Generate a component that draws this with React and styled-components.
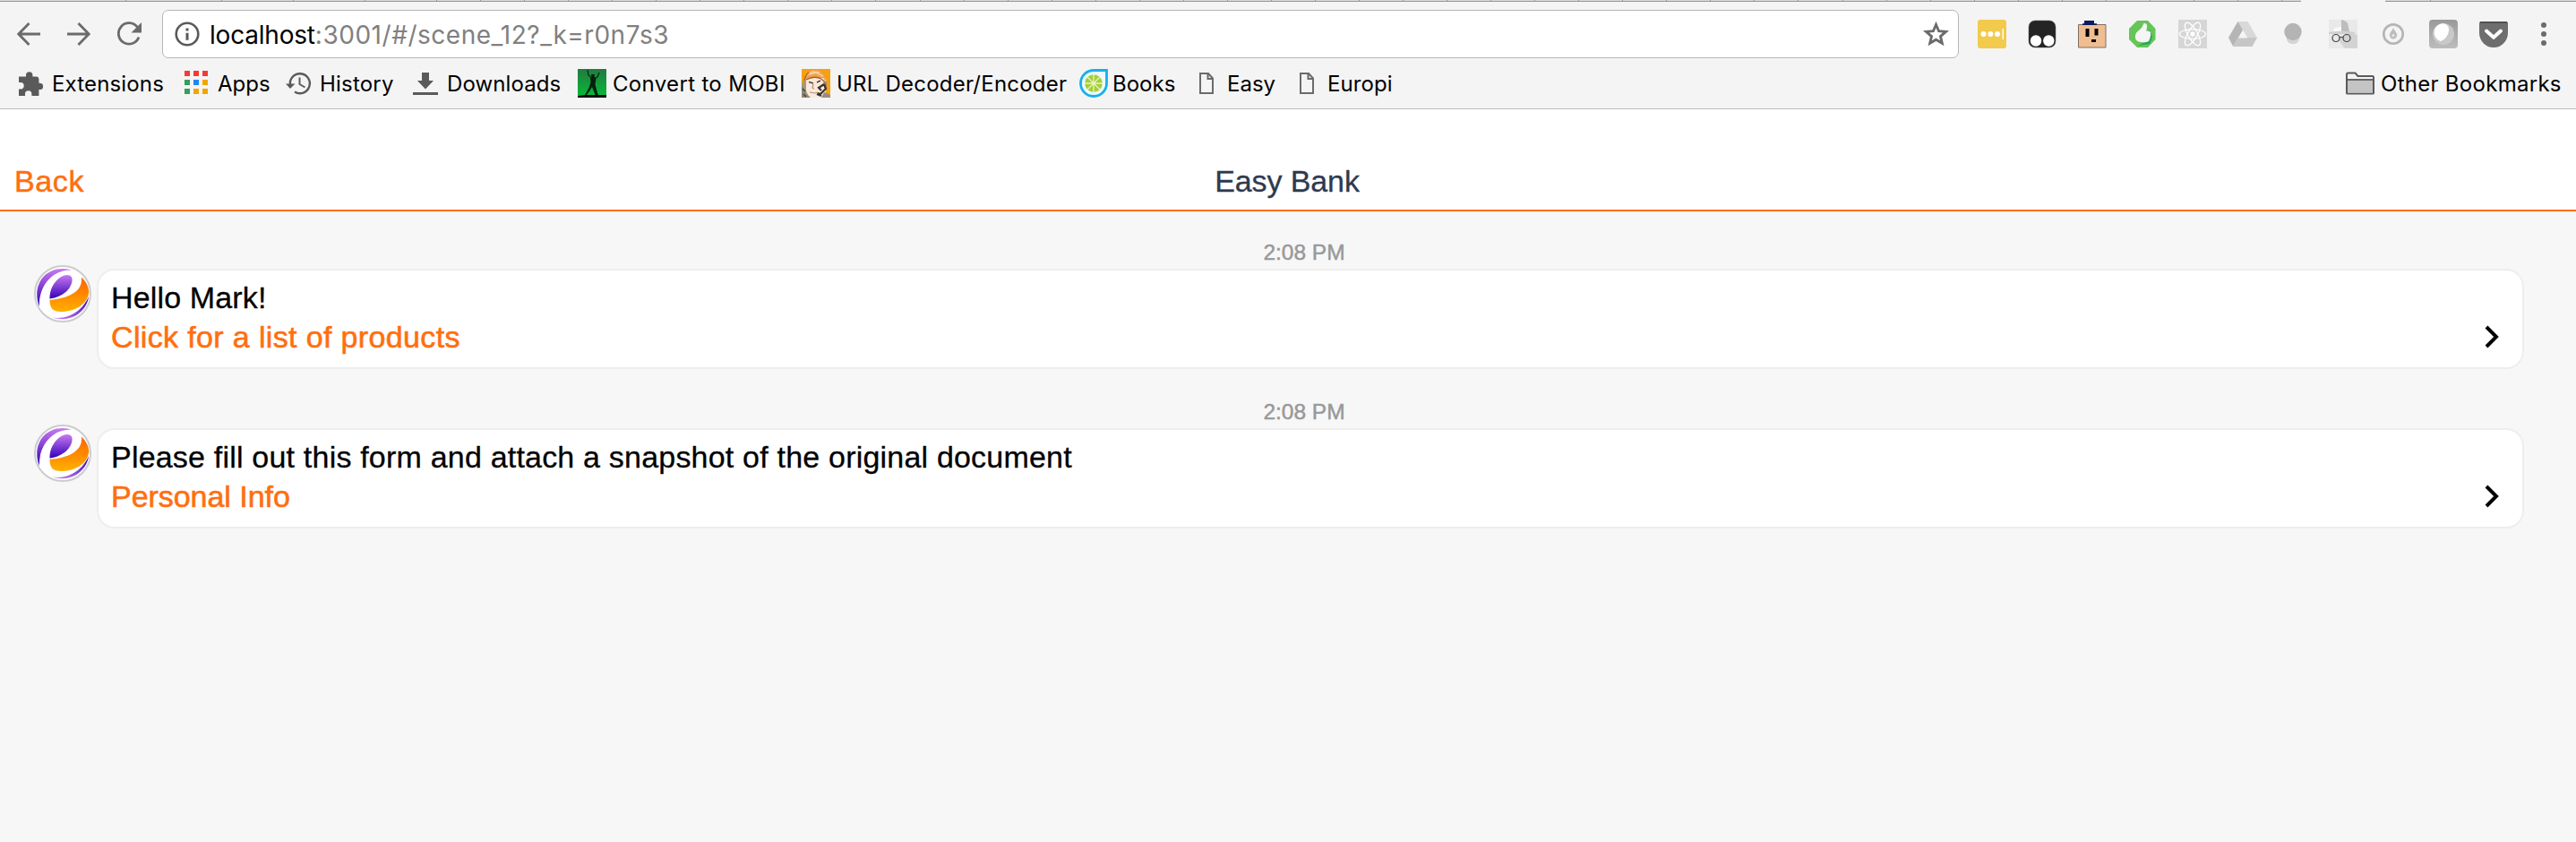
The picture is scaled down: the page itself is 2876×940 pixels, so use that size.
import React from "react";
import styled, { createGlobalStyle } from "styled-components";

const GlobalStyle = createGlobalStyle`
  * { box-sizing: border-box; }
  body { margin: 0; background: #f7f7f7; }
  svg { display: block; flex: none; }
`;

const Page = styled.div`
  width: 2876px;
  height: 940px;
  display: flex;
  flex-direction: column;
  overflow: hidden;
  background: #f7f7f7;
  font-family: "Liberation Sans", Arial, sans-serif;
`;

const Chrome = styled.header`
  flex: none;
  height: 122px;
  background: #f4f4f4;
  border-bottom: 1px solid #bcbcbc;
  font-family: Inter, sans-serif;
`;

const TabStrip = styled.div`
  display: flex;
  height: 2px;
`;

const Tab = styled.div`
  flex: none;
  width: ${(p) => p.$width}px;
  background: ${(p) => (p.$active ? "#f4f4f4" : "#dadada")};
  border-bottom: 1px solid ${(p) => (p.$active ? "#f4f4f4" : "#979797")};
  border-right: ${(p) => (p.$edge ? "1px solid #979797" : "0")};
`;

const NavRow = styled.div`
  display: flex;
  align-items: center;
  height: 54px;
  margin-top: 9px;
  padding-left: 19px;
`;

const NavButton = styled.button`
  flex: none;
  width: ${(p) => p.$width}px;
  padding: 0;
  border: 0;
  background: none;
`;

const AddressBar = styled.div`
  flex: none;
  display: flex;
  align-items: center;
  width: 2006px;
  height: 54px;
  padding: 0 9px 0 13px;
  background: #fff;
  border: 1px solid #b6b6b6;
  border-radius: 7px;
`;

const Url = styled.div`
  flex: 1;
  margin-left: 11px;
  padding-top: 1px;
  font-size: 28px;
  line-height: 34px;
  letter-spacing: 0.52px;
  color: #808080;
  white-space: nowrap;
`;

const Host = styled.span`
  color: #000;
  letter-spacing: -0.2px;
`;

const ExtensionList = styled.div`
  display: flex;
  gap: 24px;
  margin-left: 21px;
`;

const MenuButton = styled(NavButton)`
  margin-left: 37px;
`;

const BookmarkRow = styled.nav`
  display: flex;
  align-items: center;
  height: 32px;
  margin-top: 12px;
  padding: 0 15px 0 20px;
`;

const BookmarkItem = styled.a`
  flex: none;
  display: flex;
  align-items: center;
  width: ${(p) => p.$width}px;
  margin-left: ${(p) => (p.$last ? "auto" : "0")};
`;

const BookmarkIcon = styled.span`
  flex: none;
  width: ${(p) => p.$slot}px;
`;

const BookmarkLabel = styled.span`
  padding-top: 1px;
  font-size: 24px;
  line-height: 30px;
  letter-spacing: ${(p) => p.$tracking}px;
  color: #000;
  white-space: nowrap;
`;

const TitleBar = styled.div`
  flex: none;
  display: grid;
  grid-template-columns: 1fr auto 1fr;
  height: 114px;
  padding: 60px 18px 0 16px;
  background: #fff;
  border-bottom: 2px solid #ff6f0f;
  font-size: 34px;
  line-height: 40px;
`;

const BackLink = styled.a`
  color: #ff6f0f;
  letter-spacing: 0.6px;
  -webkit-text-stroke: 0.5px #ff6f0f;
`;

const Title = styled.h1`
  margin: 0;
  font-size: inherit;
  font-weight: 400;
  letter-spacing: -0.1px;
  color: #2d3a50;
  -webkit-text-stroke: 0.3px #2d3a50;
`;

const Chat = styled.main`
  display: flex;
  flex-direction: column;
  gap: 32px;
  padding: 32px 0 0 38px;
`;

const Message = styled.section`
  display: flex;
  flex-direction: column;
`;

const Time = styled.time`
  height: 28px;
  padding-right: 2px;
  font-size: 24.5px;
  line-height: 28px;
  text-align: center;
  color: #999;
  -webkit-text-stroke: 0.5px #999;
`;

const MessageBody = styled.div`
  display: flex;
  gap: 6px;
  height: 118px;
`;

const Avatar = styled.div`
  flex: none;
  width: 64px;
  height: 64px;
`;

const Bubble = styled.div`
  display: flex;
  justify-content: space-between;
  align-items: flex-end;
  width: 2710px;
  height: 112px;
  margin-top: 4px;
  padding: 0 25px 12px 14px;
  background: #fff;
  border: 2px solid #eee;
  border-radius: 20px;
`;

const Line = styled.div`
  font-size: 34px;
  line-height: 44px;
  letter-spacing: ${(p) => p.$tracking}px;
  color: ${(p) => (p.$link ? "#ff6f0f" : "#000")};
  -webkit-text-stroke: ${(p) => (p.$link ? "0.6px #ff6f0f" : "0.3px #000")};
  white-space: nowrap;
`;

const Chevron = styled.svg`
  margin-bottom: 8px;
`;

const Icon = ({ w = 32, h = 32, children, ...rest }) => (
  <svg width={w} height={h} viewBox={`0 0 ${w} ${h}`} fill="none" {...rest}>
    {children}
  </svg>
);

const BackArrow = () => (
  <Icon w={28} stroke="#6b6b6b" strokeWidth="2.8">
    <path d="M26 16H2M13.500 4L1.800 16l11.700 12" />
  </Icon>
);

const ForwardArrow = () => (
  <Icon w={28} stroke="#6b6b6b" strokeWidth="2.8">
    <path d="M0 16h24M12.500 4l11.700 12-11.700 12" />
  </Icon>
);

const Reload = () => (
  <Icon w={28}>
    <path d="M22.500 8.500A11.700 11.700 0 1 0 24 19.500" stroke="#6b6b6b" strokeWidth="2.8" />
    <path d="M27 3v11.500H15.500z" fill="#6b6b6b" />
  </Icon>
);

const Info = () => (
  <Icon w={28} h={28}>
    <circle cx="14" cy="14" r="12.300" stroke="#5a5a5a" strokeWidth="2.600" />
    <path d="M12.500 7.500h3v3h-3zM12.500 12.700h3v8h-3z" fill="#5a5a5a" />
  </Icon>
);

const Star = () => (
  <Icon>
    <path
      d="M16.500 5.500l3.100 7.200 7.900.7-6 5.200 1.800 7.700-6.800-4.100-6.800 4.100 1.800-7.700-6-5.200 7.900-.7z"
      stroke="#6b6b6b"
      strokeWidth="2.900"
    />
  </Icon>
);

const TypingIcon = () => (
  <Icon>
    <rect width="32" height="32" rx="3" fill="#f2ca4c" />
    <g fill="#fff">
      <circle cx="6.500" cy="16" r="3" />
      <circle cx="14.300" cy="16" r="3" />
      <circle cx="22" cy="16" r="3" />
      <path d="M27.500 10h1.500v12h-1.500z" />
    </g>
  </Icon>
);

const GogglesIcon = () => (
  <Icon>
    <rect x="1" y="1" width="30" height="30" rx="7" fill="#242424" stroke="#555" strokeWidth=".5" />
    <circle cx="9" cy="23.500" r="6.200" fill="#fff" />
    <circle cx="23.300" cy="23.500" r="6.200" fill="#fff" />
  </Icon>
);

const BoxFaceIcon = () => (
  <Icon>
    <path d="M7 1h11v4H7z" fill="#0d1b5e" />
    <path d="M.5 5.500h30.500v25.500H.5z" fill="#efbd92" stroke="#806e60" />
    <path d="M5 4.200h16v1.800H5z" fill="#0d1b5e" />
    <path d="M8.500 10h4v9h-4zM18.500 10h4v7.500h-4zM15 22h5v3h-5z" fill="#000" />
  </Icon>
);

const ThumbIcon = () => (
  <Icon>
    <path d="M10 1h12l8.500 9v12L22 31H10L1 22V10z" fill="#65c558" />
    <path d="M11 29l13-2 3-8-3-8-5 14z" fill="#159c55" opacity=".8" />
    <path
      d="M17.500 4c2.500-.5 4 1.500 3.500 4l-.7 4.500 3.500.5c1.600.3 1.600 2 1 3 .8 1 .6 2.200-.3 3 .5 1.200 0 2.200-.8 2.700.2 1.800-1 2.800-2.500 3-3 .8-7 .8-9.500-.2-3-1-4-3-3.700-6 .2-4 2-5 5-7.500 2.500-2.200 3-4 4.500-7z"
      fill="#f5f5f5"
    />
  </Icon>
);

const AtomIcon = () => (
  <Icon>
    <path d="M0 0h32v32H0z" fill="#d6d6d6" />
    <g stroke="#fff" strokeWidth="1.300">
      <ellipse cx="16" cy="16" rx="14.500" ry="5.300" />
      <ellipse cx="16" cy="16" rx="14.500" ry="5.300" transform="rotate(60 16 16)" />
      <ellipse cx="16" cy="16" rx="14.500" ry="5.300" transform="rotate(120 16 16)" />
    </g>
    <circle cx="16" cy="16" r="2.700" fill="#fff" />
  </Icon>
);

const DriveIcon = () => (
  <Icon>
    <path d="M10.500 2h11L32 20H21z" fill="#d9d9d9" />
    <path d="M10.500 2L0 20l5.300 10L16 11.500z" fill="#b5b5b5" />
    <path d="M5.300 30L11 20h21l-5.500 10z" fill="#c6c6c6" />
    <path d="M16 12l-5 8.500h10z" fill="#f4f4f4" />
  </Icon>
);

const BulbIcon = () => (
  <Icon>
    <circle cx="16" cy="20" r="7.300" fill="#d5d5d5" />
    <circle cx="16" cy="13.500" r="9.700" fill="#b4b4b4" />
  </Icon>
);

const SpyIcon = () => (
  <Icon>
    <path d="M0 0h32v32H0z" fill="#e9e9e9" />
    <path d="M10 22l13-8 9 3v15H18z" fill="#d3d3d3" />
    <path d="M14 0c4 1 6 2 7 4l2 9-9 1z" fill="#bdbdbd" />
    <path d="M7 9l7-1v5H5z" fill="#fafafa" />
    <path d="M0 14q15-3 30 0l-2 2H0z" fill="#d0d0d0" />
    <g stroke="#454545" strokeWidth="1.200">
      <circle cx="8" cy="20.500" r="4" />
      <circle cx="20" cy="20.500" r="4" />
      <path d="M12 20q2-1.500 4 0" />
    </g>
  </Icon>
);

const DropIcon = () => (
  <Icon>
    <circle cx="16" cy="16" r="10.700" stroke="#b5b5b5" strokeWidth="2.700" />
    <path d="M16 9c2 4 4.200 6 4.200 8.300a4.200 4.200 0 0 1-8.400 0C11.800 15 14 13 16 9z" fill="#bdbdbd" />
    <circle cx="16" cy="17.500" r="1.500" fill="#e8e8e8" />
  </Icon>
);

const OrbIcon = () => (
  <Icon>
    <defs>
      <linearGradient id="orb-bg" x1="0" y1="0" x2="0" y2="1">
        <stop offset="0" stopColor="#999" />
        <stop offset="1" stopColor="#bdbdbd" />
      </linearGradient>
    </defs>
    <rect width="32" height="32" rx="4" fill="url(#orb-bg)" />
    <circle cx="16" cy="16" r="12" fill="#c9c9c9" />
    <path d="M10 6c7-4 12 0 12 5 0 6-4 11-9 13C5 22 3 11 10 6z" fill="#fff" />
  </Icon>
);

const PocketIcon = () => (
  <Icon>
    <path d="M2 2h28q2 0 2 2v10.500a16 16.500 0 0 1-32 0V4q0-2 2-2z" fill="#6e6e6e" />
    <path d="M1 3h30" stroke="#484848" strokeWidth="1.500" />
    <path d="M8 12.500l8 7.300 8-7.300" stroke="#fff" strokeWidth="4" strokeLinecap="round" strokeLinejoin="round" />
  </Icon>
);

const MenuDots = () => (
  <Icon w={6} h={28}>
    <circle cx="3" cy="4" r="3" fill="#6b6b6b" />
    <circle cx="3" cy="14" r="3" fill="#6b6b6b" />
    <circle cx="3" cy="24" r="3" fill="#6b6b6b" />
  </Icon>
);

const PuzzleIcon = () => (
  <Icon w={28}>
    <path
      d="M1 8.500h8V7a3.700 3.700 0 0 1 7.400 0v1.500h4q3 0 3 3v4.200h1a3.700 3.700 0 0 1 0 7.400h-1V30h-8v-2a3.700 3.700 0 0 0-7.400 0v2H1v-7.500h2a3.700 3.700 0 0 0 0-7.400H1z"
      fill="#5a5a5a"
    />
  </Icon>
);

const APP_COLORS = ["#f53a35", "#f53a35", "#f53a35", "#31a05a", "#2086f5", "#f2a500", "#31a05a", "#f2a500", "#f2a500"];

const AppsIcon = () => (
  <Icon w={28}>
    {APP_COLORS.map((c, i) => (
      <rect key={i} x={1 + (i % 3) * 10} y={2 + Math.floor(i / 3) * 10} width="6" height="6" fill={c} />
    ))}
  </Icon>
);

const HistoryIcon = () => (
  <Icon w={30}>
    <path d="M5 18A11 11 0 1 1 10 25.500" stroke="#5a5a5a" strokeWidth="2.400" />
    <path d="M0 16.500h10.500L5 22z" fill="#5a5a5a" />
    <path d="M15.500 9.500V17l6 3.500" stroke="#5a5a5a" strokeWidth="2" />
  </Icon>
);

const DownloadIcon = () => (
  <Icon w={28}>
    <path d="M10 4h8v9h5l-9 9.500L5 13h5zM0 26h28v3H0z" fill="#5a5a5a" />
  </Icon>
);

const DancerIcon = () => (
  <Icon>
    <defs>
      <linearGradient id="dancer-bg" x1="0" y1="0" x2="0" y2="1">
        <stop offset="0" stopColor="#237a40" />
        <stop offset="1" stopColor="#05bd37" />
      </linearGradient>
    </defs>
    <path d="M0 0h32v32H0z" fill="url(#dancer-bg)" />
    <path d="M11 1l1 6 4 3M24 4l-2 5-4 2" stroke="#0a3517" strokeWidth="1.500" />
    <path d="M15 6h4l-.5 3 2 1.500-1 6.500 2 8 1.500 5h-3l-4-10-3 5-4 5H7.500l5-9 2-6-.5-5 1.500-1z" fill="#06200d" />
    <path d="M0 30l8-1h24v3H0z" fill="#021006" />
  </Icon>
);

const PortraitIcon = () => (
  <Icon>
    <path d="M0 0h32v32H0z" fill="#f7a010" />
    <path d="M0 32V17l3-6 4-1 3 22z" fill="#a89878" />
    <path d="M5 10h22l1 12-4 10H8l-3-8z" fill="#fbe9dc" />
    <path d="M3 14Q4 2 15 1q11 0 13 14l-4-5q-9-3-16 0z" fill="#f0a050" />
    <path d="M6 7l6-4 8 1M9 6l7-2 8 4" stroke="#ffd09a" strokeWidth="1.500" />
    <path d="M5 12q9-5 17-1l4 4M3 13q1-6 5-9" stroke="#a5622c" strokeWidth="1.300" />
    <path d="M24 12l4 3v9l-3-4z" fill="#a5825e" />
    <path d="M8 14.500l5 1.500M17 15l4-2" stroke="#4d4540" strokeWidth="1.600" />
    <path d="M13 17l-1 4 2 1M9 26l6 1 3-1" stroke="#b58f7c" strokeWidth="1.200" />
    <path d="M25 17l-6 4 3 3M25 17l2 5-6 6-3-1M17 28l5 2" stroke="#39322e" strokeWidth="2.200" />
    <path d="M0 19l4 4 1 4 5 5H0z" fill="#8e8878" />
    <path d="M1 22l3 3M2 28l3 3" stroke="#4f493f" strokeWidth="1.500" />
    <path d="M22 32l3-6 7 3v3z" fill="#968d80" />
  </Icon>
);

const LimeIcon = () => (
  <Icon>
    <path d="M16 1.500h14.500V16A14.500 14.500 0 1 1 16 1.500z" fill="#eefafd" stroke="#16b0ec" strokeWidth="2.800" />
    <circle cx="16" cy="16" r="9.800" fill="#a6ce39" />
    <path d="M16 6v20M6 16h20M9 9l14 14M23 9L9 23" stroke="#e6f3c0" strokeWidth="1.300" />
    <circle cx="16" cy="16" r="2" fill="#e6f3c0" />
  </Icon>
);

const PageIcon = () => (
  <Icon w={16}>
    <path d="M1 5h9l5 5.500V27H1zM9.500 5v6H15" stroke="#6b6b6b" strokeWidth="2" />
  </Icon>
);

const FolderIcon = () => (
  <Icon>
    <path d="M1 27V6q0-1.500 1.500-1.500h8L13.500 8H30q1 0 1 1.500V27q0 .500-1 .500H2q-1 0-1-.500z" fill="#f4f4f4" stroke="#5a5a5a" strokeWidth="2" />
    <path d="M2 13h28v13.500H2z" fill="#c4c4c4" />
    <path d="M1 12h30" stroke="#5a5a5a" strokeWidth="1.800" />
  </Icon>
);

const BrandLogo = () => (
  <svg width="64" height="64" viewBox="0 0 64 64">
    <defs>
      <linearGradient id="brand-purple" x1="0" y1="0" x2="0" y2="1">
        <stop offset="0" stopColor="#c77af0" />
        <stop offset="1" stopColor="#3500b8" />
      </linearGradient>
      <linearGradient id="brand-orange" x1="0" y1="0" x2="0" y2="1">
        <stop offset="0" stopColor="#ff6200" />
        <stop offset="1" stopColor="#ffb000" />
      </linearGradient>
      <linearGradient id="brand-tail" x1="1" y1="0" x2="0" y2="1">
        <stop offset="0" stopColor="#3500b8" />
        <stop offset="1" stopColor="#cf8af5" />
      </linearGradient>
    </defs>
    <circle cx="32" cy="32" r="31" fill="#fff" stroke="#ccc" strokeWidth="2" />
    <path d="M6 46C-2 27 8 4 32 4q6 0 10 1.500C18 5 5 26 6 46z" fill="url(#brand-purple)" />
    <path d="M17.500 37.500C17 22 29 11 37 11c9 0 6 12-1 18.500-5 4.500-11 7-18.500 8z" fill="url(#brand-purple)" />
    <path d="M53 13.500c6 6 8 11 8.300 17C59 46 43 52 30 52c-9 0-12.500-4-12.500-13.300C37 37.500 55 30 53 13.500z" fill="url(#brand-orange)" />
    <path d="M61 35C59 52 41 65 20.500 58.500 39 61 54 51 61 35z" fill="url(#brand-tail)" />
  </svg>
);

const TABS = [
  { width: 141, edge: true },
  { width: 107, edge: true },
  { width: 80, edge: true },
  { width: 80, edge: true },
  { width: 80, edge: true },
  ...Array.from({ length: 42 }, () => ({ width: 49.05, edge: true })),
  { width: 21 },
  { width: 94, active: true },
  { width: 51, edge: true },
  { width: 162 },
];

const EXTENSIONS = [
  TypingIcon, GogglesIcon, BoxFaceIcon, ThumbIcon, AtomIcon, DriveIcon,
  BulbIcon, SpyIcon, DropIcon, OrbIcon, PocketIcon,
];

const BOOKMARKS = [
  { label: "Extensions", icon: PuzzleIcon, width: 185, slot: 38, tracking: 0.15 },
  { label: "Apps", icon: AppsIcon, width: 114, slot: 38, tracking: 0 },
  { label: "History", icon: HistoryIcon, width: 142, slot: 38, tracking: 0.2 },
  { label: "Downloads", icon: DownloadIcon, width: 184, slot: 38, tracking: 0.1 },
  { label: "Convert to MOBI", icon: DancerIcon, width: 250, slot: 39, tracking: 0.33 },
  { label: "URL Decoder/Encoder", icon: PortraitIcon, width: 310, slot: 39, tracking: 0.22 },
  { label: "Books", icon: LimeIcon, width: 134, slot: 37, tracking: 0 },
  { label: "Easy", icon: PageIcon, width: 112, slot: 31, tracking: 0 },
  { label: "Europi", icon: PageIcon, width: 110, slot: 31, tracking: 0.1 },
  { label: "Other Bookmarks", icon: FolderIcon, width: 242, slot: 39, tracking: 0.28, last: true },
];

const MESSAGES = [
  {
    time: "2:08 PM",
    text: "Hello Mark!",
    link: "Click for a list of products",
    tracking: 0.15,
    linkTracking: 0.36,
  },
  {
    time: "2:08 PM",
    text: "Please fill out this form and attach a snapshot of the original document",
    link: "Personal Info",
    tracking: 0.2,
    linkTracking: -0.04,
  },
];

export default function App() {
  return (
    <>
      <GlobalStyle />
      <Page>
        <Chrome>
          <TabStrip>
            {TABS.map((t, i) => (
              <Tab key={i} $width={t.width} $edge={t.edge} $active={t.active} />
            ))}
          </TabStrip>
          <NavRow>
            <NavButton $width={56} aria-label="Back"><BackArrow /></NavButton>
            <NavButton $width={56} aria-label="Forward"><ForwardArrow /></NavButton>
            <NavButton $width={50} aria-label="Reload"><Reload /></NavButton>
            <AddressBar>
              <Info />
              <Url><Host>localhost</Host>:3001/#/scene_12?_k=r0n7s3</Url>
              <Star />
            </AddressBar>
            <ExtensionList>
              {EXTENSIONS.map((Ext, i) => <Ext key={i} />)}
            </ExtensionList>
            <MenuButton $width={6} aria-label="Menu"><MenuDots /></MenuButton>
          </NavRow>
          <BookmarkRow>
            {BOOKMARKS.map(({ label, icon: Glyph, width, slot, tracking, last }) => (
              <BookmarkItem key={label} $width={width} $last={last}>
                <BookmarkIcon $slot={slot}><Glyph /></BookmarkIcon>
                <BookmarkLabel $tracking={tracking}>{label}</BookmarkLabel>
              </BookmarkItem>
            ))}
          </BookmarkRow>
        </Chrome>
        <TitleBar>
          <BackLink>Back</BackLink>
          <Title>Easy Bank</Title>
        </TitleBar>
        <Chat>
          {MESSAGES.map((m) => (
            <Message key={m.text}>
              <Time>{m.time}</Time>
              <MessageBody>
                <Avatar><BrandLogo /></Avatar>
                <Bubble>
                  <div>
                    <Line $tracking={m.tracking}>{m.text}</Line>
                    <Line $link $tracking={m.linkTracking}>{m.link}</Line>
                  </div>
                  <Chevron width="18" height="28" viewBox="0 0 18 28" fill="none" stroke="#000" strokeWidth="4">
                    <path d="M3 3l11 11L3 25" />
                  </Chevron>
                </Bubble>
              </MessageBody>
            </Message>
          ))}
        </Chat>
      </Page>
    </>
  );
}
